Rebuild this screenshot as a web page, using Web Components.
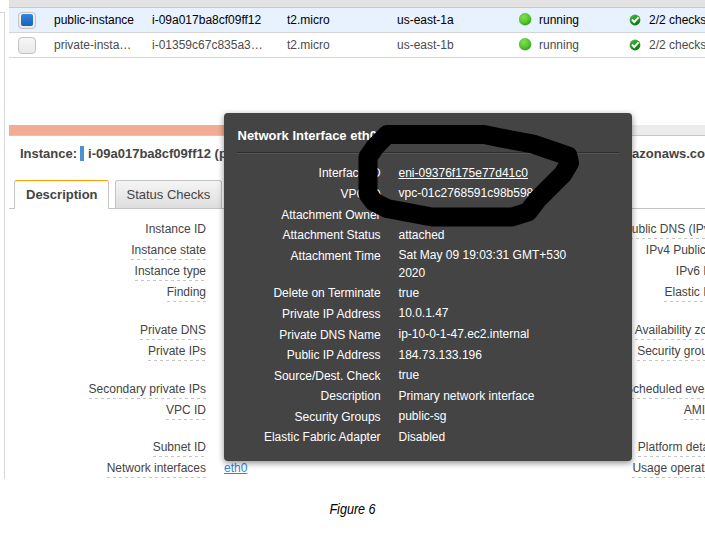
<!DOCTYPE html>
<html lang="en"><head><meta charset="utf-8"><title>Network interface</title>
<style>
html,body{margin:0;height:547px;overflow:hidden;background:#fff}
body{font:12px/18px "Liberation Sans",Arial,sans-serif;color:#444}
</style></head><body>
<console-page></console-page>
<script>
const define=(name,css,html)=>customElements.define(name,class extends HTMLElement{
  connectedCallback(){
    if(this.shadowRoot)return;
    const r=this.attachShadow({mode:'open'});
    r.innerHTML=`<style>*{box-sizing:border-box}${css}</style>${typeof html==='function'?html(this):html}`;
  }
});

define('status-dot',':host{display:block;width:13px;height:13px}svg{display:block}',
`<svg width="13" height="13" viewBox="0 0 13 13"><defs><radialGradient id="g" cx=".38" cy=".3" r=".75"><stop offset="0" stop-color="#82e04c"/><stop offset=".6" stop-color="#55c92d"/><stop offset="1" stop-color="#2b9c12"/></radialGradient></defs><circle cx="6.1" cy="6.3" r="6" fill="url(#g)" stroke="#48ad27" stroke-width=".4"/></svg>`);

define('check-badge',':host{display:block;width:12px;height:12px}svg{display:block}',
`<svg width="12" height="12" viewBox="0 0 12 12"><defs><linearGradient id="g" x2=".5" y2="1"><stop offset="0" stop-color="#4cbb45"/><stop offset="1" stop-color="#087f0d"/></linearGradient></defs><circle cx="6" cy="6" r="5.4" fill="url(#g)"/><path d="M3 5.5L5.2 8L9.6 3.4" fill="none" stroke="#fff" stroke-width="1.9"/></svg>`);

define('check-box',`:host{display:block;box-sizing:border-box;width:18px;height:17px;border:1px solid #c2c2c2;border-radius:4px;background:linear-gradient(#f5f5f5,#e9e9e9);padding:1px 2px}
:host([checked]) i{display:block;width:12px;height:12px;border-radius:2px;background:linear-gradient(#3585dc,#1663b8)}`,'<i></i>');

define('instance-row',`:host{display:grid;grid-template-columns:45px 98px 135px 110px 122px 20px 90px 20px 1fr;height:25px;align-items:center;border-bottom:1px solid #d5d5d5;white-space:nowrap;overflow:hidden;color:#4b4b4b}
:host([selected]){background:#e8f1fe;color:#000}
check-box{margin-left:9px}span{line-height:18px}status-dot{margin-top:-1px}check-badge{margin-top:-1px}`,
e=>`<check-box ${e.hasAttribute('selected')?'checked':''}></check-box><span>${e.getAttribute('name')}</span><span>${e.getAttribute('iid')}</span><span>t2.micro</span><span>${e.getAttribute('zone')}</span><status-dot></status-dot><span>running</span><check-badge></check-badge><span>2/2 checks</span>`);

define('tab-item',`:host{display:block;box-sizing:border-box;height:28px;border:1px solid #c4c4c4;border-bottom:0;border-radius:3px 3px 0 0;background:linear-gradient(#f5f5f5,#dedede);font-size:13px;line-height:27px;padding-left:10.5px;white-space:nowrap}
:host([active]){height:29px;background:#fff;border-top:1px solid #ff9900;font-weight:bold;color:#444;padding-left:11px}`,'<slot></slot>');

define('detail-label',`:host{display:flex;justify-content:flex-end;height:21px;white-space:nowrap}
span{display:block;height:20px;line-height:20px}
.d{background:repeating-linear-gradient(90deg,#c6c6c6 0 3px,transparent 3px 6px) bottom/100% 1px no-repeat}
:host([gap]){margin-top:17px}:host([gap=small]){margin-top:16px}`,
e=>`<span class="${e.hasAttribute('plain')?'':'d'}"><slot></slot></span>`);

define('popup-row',`:host{display:grid;grid-template-columns:143.6px 1fr;column-gap:17.9px;height:var(--h);color:#fff}
.l{text-align:right;line-height:20px;white-space:nowrap}
.v{line-height:18px;padding-top:var(--p);width:180px;white-space:nowrap}
:host([wrap]) .v{white-space:normal}
:host([link]) .v{text-decoration:underline;text-underline-offset:1px}`,
e=>`<span class="l">${e.getAttribute('label')}</span><span class="v"><slot></slot></span>`);

const rows=[['Interface ID','eni-09376f175e77d41c0',21,1,'link'],['VPC ID','vpc-01c2768591c98b598',21,0],['Attachment Owner','',20,1],['Attachment Status','attached',21,1],['Attachment Time','Sat May 09 19:03:31 GMT+530 2020',37,0,'wrap'],['Delete on Terminate','true',21,1],['Private IP Address','10.0.1.47',21,0],['Private DNS Name','ip-10-0-1-47.ec2.internal',20,0],['Public IP Address','184.73.133.196',21,1],['Source/Dest. Check','true',20,0],['Description','Primary network interface',21,1],['Security Groups','public-sg',20,0],['Elastic Fabric Adapter','Disabled',20,1]];
define('interface-popup',`:host{display:block;box-sizing:border-box;width:408px;height:348px;border-radius:4px;background:#444;box-shadow:0 2px 6px rgba(0,0,0,.45);padding:14px 13px 0}
h2{margin:0;padding-left:.5px;font-size:13px;line-height:18px;color:#fff;height:25px;white-space:nowrap}
hr{margin:0 0 9px;border:0;border-top:1px solid #2f2f2f;border-bottom:1px solid #555;height:2px}`,
`<h2>Network Interface eth0</h2><hr>`+rows.map(r=>`<popup-row label="${r[0]}" ${r[4]||''} style="--h:${r[2]}px;--p:${r[3]}px">${r[1]}</popup-row>`).join(''));

define('marker-loop',':host{display:block;pointer-events:none}svg{display:block}',
`<svg width="240" height="120" viewBox="350 115 240 120"><path d="M387 134.5H484L501 138L533 144L568 156L569.5 163L563 174L538 199L528 212L512 217H432L387 208.5L374 202L368 194V157L375 147Z" fill="none" stroke="#000" stroke-width="19" stroke-linejoin="round"/></svg>`);

define('console-page',`:host{display:block;position:relative;width:705px;height:547px;overflow:hidden}
.shell{display:flex;height:479px}
.rail{width:5px;height:467px;margin-top:12px;border:1px solid #d6d6d6;border-left:0;border-bottom:0;flex:none}
main{margin-left:4px;width:696px;overflow:hidden;flex:none}
.head{height:8px;background:#e2e2e2;border-bottom:1px solid #c9c9c9}
.split{margin-top:67px;height:11px;border-bottom:1px solid #c9c9c9;background:linear-gradient(90deg,#f2ac93 300px,#ececec 300px)}
h1{margin:0;height:44px;padding:9px 0 0 11px;font-size:13px;line-height:18px;display:flex;white-space:nowrap}
h1 i{width:4px;height:15px;background:#4c92d3;margin:1px 4px 0 3px;flex:none}
h1 .id{width:544px;flex:none}
.tabs{height:29px;display:flex;gap:6px;padding-left:5px;background:linear-gradient(#c4c4c4,#c4c4c4) bottom/100% 1px no-repeat}
.tabs tab-item:first-child{width:95px}.tabs tab-item:last-child{width:107px}
.details{display:grid;grid-template-columns:197px 18px 1fr;padding-top:10px}
.right{width:496.5px}
a{align-self:end;color:#3184d6;text-decoration:underline;text-underline-offset:1px;line-height:20px;height:21px}
interface-popup{position:absolute;left:224px;top:113px}
marker-loop{position:absolute;left:350px;top:115px}
figcaption{text-align:center;color:#000;font-size:14px;font-style:italic;line-height:20px;padding-top:20px;transform:scaleX(.9)}`,
`<div class="shell"><div class="rail"></div><main>
<div class="head"></div>
<instance-row selected name="public-instance" iid="i-09a017ba8cf09ff12" zone="us-east-1a"></instance-row>
<instance-row name="private-insta…" iid="i-01359c67c835a3…" zone="us-east-1b"></instance-row>
<div class="split"></div>
<h1><span>Instance:</span><i></i><span class="id">i-09a017ba8cf09ff12 (p</span><span>azonaws.com</span></h1>
<div class="tabs"><tab-item active>Description</tab-item><tab-item>Status Checks</tab-item></div>
<div class="details"><div>
<detail-label plain>Instance ID</detail-label><detail-label>Instance state</detail-label><detail-label>Instance type</detail-label><detail-label>Finding</detail-label>
<detail-label gap>Private DNS</detail-label><detail-label>Private IPs</detail-label>
<detail-label gap>Secondary private IPs</detail-label><detail-label>VPC ID</detail-label>
<detail-label gap="small">Subnet ID</detail-label><detail-label>Network interfaces</detail-label>
</div><a style="grid-column:3;grid-row:1">eth0</a>
<div class="right" style="grid-column:3;grid-row:1">
<detail-label>Public DNS (IPv4)</detail-label><detail-label plain>IPv4 Public IP</detail-label><detail-label plain>IPv6 IPs</detail-label><detail-label>Elastic IPs</detail-label>
<detail-label gap>Availability zone</detail-label><detail-label>Security groups</detail-label>
<detail-label gap>Scheduled events</detail-label><detail-label>AMI ID</detail-label>
<detail-label gap="small">Platform details</detail-label><detail-label>Usage operation</detail-label>
</div></div>
</main></div>
<figcaption>Figure 6</figcaption>
<interface-popup></interface-popup><marker-loop></marker-loop>`);
</script></body></html>
